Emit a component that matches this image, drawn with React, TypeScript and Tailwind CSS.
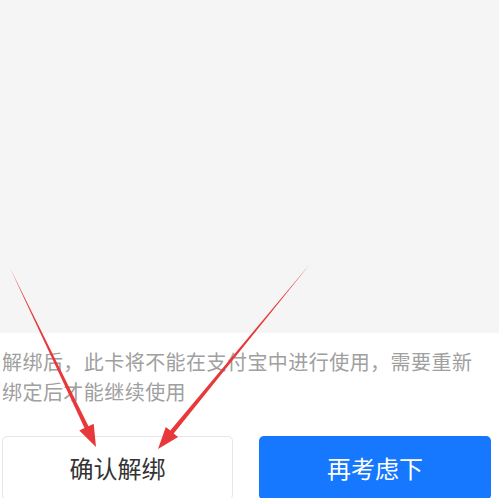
import React from "react"

type Pt = [number, number]

// tapered red arrow: thin tail, thick shaft near the head
const arrowPoints = (s: Pt, t: Pt, head = 22, headHalf = 8, shaftHalf = 2.2) => {
    const dx = t[0] - s[0]
    const dy = t[1] - s[1]
    const len = Math.hypot(dx, dy)
    const ux = dx / len
    const uy = dy / len
    const nx = -uy
    const ny = ux
    const bx = t[0] - head * ux
    const by = t[1] - head * uy
    const pts: Pt[] = [
        s,
        [bx + shaftHalf * nx, by + shaftHalf * ny],
        [bx + headHalf * nx, by + headHalf * ny],
        t,
        [bx - headHalf * nx, by - headHalf * ny],
        [bx - shaftHalf * nx, by - shaftHalf * ny],
    ]
    return pts.map((p) => `${p[0].toFixed(1)},${p[1].toFixed(1)}`).join(" ")
}

const App = () => {
    return (
        <div
            className="relative w-[499px] h-[498px] overflow-hidden bg-white"
            style={{ fontFamily: '"Noto Sans CJK SC", "Noto Sans", sans-serif' }}
        >
            {/* Top gray area */}
            <div className="h-[333px] bg-[#f5f5f5]" />

            {/* Notice */}
            <div className="pt-[14px] pl-[2px] pr-[20px] text-[20px] leading-[30px] tracking-[0.45px] text-[#a0a0a0]">
                解绑后，此卡将不能在支付宝中进行使用，需要重新绑定后才能继续使用
            </div>

            {/* Buttons */}
            <div className="mt-[29px] flex gap-[26px] pl-[2px] pr-[8px]">
                <button className="flex h-[64px] w-[231px] items-center justify-center rounded-[5px] border border-[#e6e6e6] bg-white text-[24px] text-[#333333]">
                    确认解绑
                </button>
                <button className="flex h-[64px] w-[232px] items-center justify-center rounded-[5px] bg-[#1677ff] text-[24px] text-white">
                    再考虑下
                </button>
            </div>

            {/* Arrows overlay */}
            <svg className="pointer-events-none absolute inset-0" width="499" height="498" viewBox="0 0 499 498">
                <polygon points={arrowPoints([10, 268], [96, 447])} fill="#e8383a" />
                <polygon points={arrowPoints([310, 264], [158, 449])} fill="#e8383a" />
            </svg>
        </div>
    )
}

export default App
